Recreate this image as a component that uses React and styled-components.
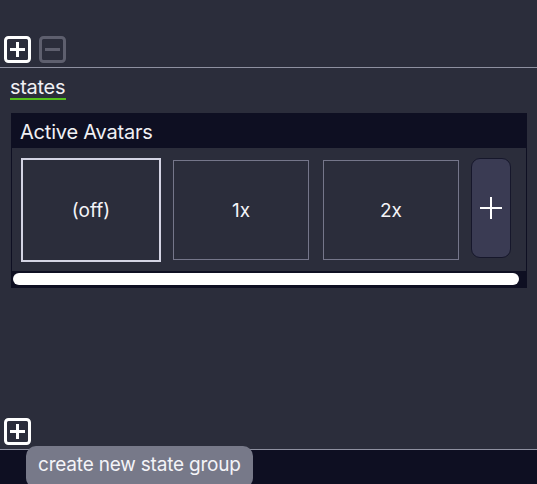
import React from "react";
import styled, { createGlobalStyle } from "styled-components";

const Global = createGlobalStyle`
  html, body { margin: 0; padding: 0; background: #2b2d3b; }
  body { font-family: Inter, "Noto Sans", sans-serif; color: #f2f2f6; }
  * { box-sizing: border-box; }
`;

const Page = styled.div`
  position: relative;
  height: 484px;
  display: flex;
  flex-direction: column;
  background: #2b2d3b;
  overflow: hidden;
`;

const Toolbar = styled.div`
  display: flex;
  gap: 8px;
  padding: ${(p) => (p.$bottom ? "0 0 4px 4px" : "36px 0 0 4px")};
`;

const IconButton = styled.button`
  width: 27px;
  height: 27px;
  padding: 0;
  border: none;
  background: none;
  display: block;
  color: ${(p) => (p.$disabled ? "#5e5f6e" : "#ffffff")};
  svg { display: block; }
`;

const Divider = styled.div`
  height: 1px;
  background: #8e90a0;
  margin-top: ${(p) => p.$gap || 0}px;
`;

const Tabs = styled.div`
  display: flex;
  padding: 8px 0 0 10px;
`;

const Tab = styled.div`
  font-size: 20px;
  line-height: 22px;
  letter-spacing: -0.3px;
  color: #f0f0f4;
  border-bottom: 2px solid #55c21b;
  padding-right: 1px;
`;

const Panel = styled.section`
  margin: 13px 10px 0 11px;
  border: 1px solid #0e0f22;
  display: flex;
  flex-direction: column;
`;

const PanelHeader = styled.header`
  height: 34px;
  background: #0e0f22;
  padding: 6px 8px 0;
  font-size: 20px;
  line-height: 24px;
  letter-spacing: -0.2px;
  color: #f0f0f4;
`;

const PanelBody = styled.div`
  padding: 10px 9px 0;
`;

const TileRow = styled.div`
  display: flex;
  gap: 10px;
  align-items: flex-start;
`;

/* Each state slot is 140×104; unselected faces sit 2px inside it */
const TileSlot = styled.div`
  width: 140px;
  height: 104px;
  padding: ${(p) => (p.$active ? 0 : 2)}px;
  display: flex;
`;

const TileFace = styled.div`
  flex: 1;
  display: flex;
  align-items: center;
  justify-content: center;
  font-size: 19px;
  color: #f4f4f8;
  border: ${(p) => (p.$active ? "2px solid #d4d4e4" : "1px solid #75768a")};
`;

const AddTile = styled.button`
  width: 40px;
  height: 100px;
  padding: 0;
  border: 1px solid #16172b;
  border-radius: 9px;
  background: #3a3b53;
  color: #ffffff;
  display: flex;
  align-items: center;
  justify-content: center;
`;

const ScrollTrack = styled.div`
  margin: 9px -9px 0;
  height: 16px;
  background: #0e0f22;
  padding: 2px 7px 2px 1px;
`;

const ScrollThumb = styled.div`
  height: 12px;
  border-radius: 6px;
  background: #ffffff;
`;

const Spacer = styled.div`
  flex: 1;
`;

const Footer = styled.div`
  height: 34px;
  background: #0e0f22;
`;

const Tooltip = styled.div`
  position: absolute;
  left: 26px;
  top: 446px;
  height: 42px;
  padding: 6px 12px 0;
  border-radius: 10px;
  background: #777989;
  color: #f4f4f8;
  font-size: 19px;
  line-height: 26px;
  letter-spacing: -0.2px;
  white-space: nowrap;
`;

const PlusSquare = () => (
  <svg width="27" height="27" viewBox="0 0 27 27">
    <rect x="1.5" y="1.5" width="24" height="24" rx="3" fill="none" stroke="currentColor" strokeWidth="3" />
    <path d="M6 13.5h15M13.5 6v15" stroke="currentColor" strokeWidth="3" />
  </svg>
);

const MinusSquare = () => (
  <svg width="27" height="27" viewBox="0 0 27 27">
    <rect x="1.5" y="1.5" width="24" height="24" rx="3" fill="none" stroke="currentColor" strokeWidth="3" />
    <path d="M6 13.5h15" stroke="currentColor" strokeWidth="3" />
  </svg>
);

const Plus = () => (
  <svg width="22" height="22" viewBox="0 0 22 22">
    <path d="M0 11h22M11 0v22" stroke="currentColor" strokeWidth="2" />
  </svg>
);

const states = [
  { label: "(off)", active: true },
  { label: "1x" },
  { label: "2x" },
];

export default function App() {
  return (
    <>
      <Global />
      <Page>
        <Toolbar>
          <IconButton aria-label="add">
            <PlusSquare />
          </IconButton>
          <IconButton $disabled aria-label="remove">
            <MinusSquare />
          </IconButton>
        </Toolbar>
        <Divider $gap={4} />
        <Tabs>
          <Tab>states</Tab>
        </Tabs>
        <Panel>
          <PanelHeader>Active Avatars</PanelHeader>
          <PanelBody>
            <TileRow>
              {states.map((s) => (
                <TileSlot key={s.label} $active={s.active}>
                  <TileFace $active={s.active}>{s.label}</TileFace>
                </TileSlot>
              ))}
              <AddTile aria-label="add state">
                <Plus />
              </AddTile>
            </TileRow>
            <ScrollTrack>
              <ScrollThumb />
            </ScrollTrack>
          </PanelBody>
        </Panel>
        <Spacer />
        <Toolbar $bottom>
          <IconButton aria-label="new group">
            <PlusSquare />
          </IconButton>
        </Toolbar>
        <Divider />
        <Footer />
        <Tooltip>create new state group</Tooltip>
      </Page>
    </>
  );
}
